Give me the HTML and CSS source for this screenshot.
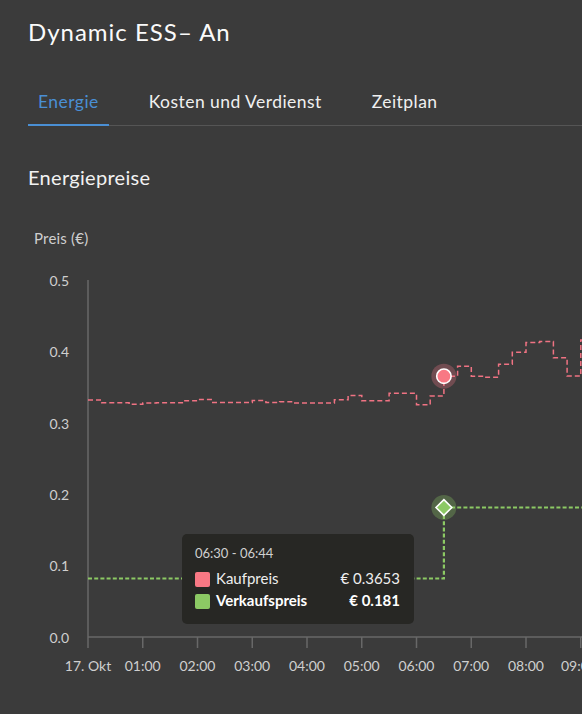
FILE: index.html
```html
<!DOCTYPE html>
<html lang="de">
<head>
<meta charset="utf-8">
<title>Dynamic ESS</title>
<link rel="stylesheet" href="styles.css">
</head>
<body>
<div class="screen">
  <header class="head">
    <h1 class="title">Dynamic ESS– An</h1>
    <nav class="tabs">
      <span class="tab active">Energie</span>
      <span class="tab">Kosten und Verdienst</span>
      <span class="tab">Zeitplan</span>
    </nav>
  </header>
  <section class="prices">
    <h2 class="section-title">Energiepreise</h2>
    <div class="chart">
      <svg class="chart-svg" width="582" height="525" viewBox="0 189 582 525" xmlns="http://www.w3.org/2000/svg">
        <text class="axis-title" x="34" y="244">Preis (€)</text>
        <g class="ylabels">
          <text x="69" y="285.5">0.5</text>
          <text x="69" y="357">0.4</text>
          <text x="69" y="428.5">0.3</text>
          <text x="69" y="499.5">0.2</text>
          <text x="69" y="571">0.1</text>
          <text x="69" y="642.5">0.0</text>
        </g>
        <g class="axes">
          <line x1="88" y1="280" x2="88" y2="637"/>
          <line x1="88" y1="637" x2="600" y2="637"/>
          <line x1="88" y1="637" x2="88" y2="648"/>
          <line x1="142.75" y1="637" x2="142.75" y2="648"/>
          <line x1="197.5" y1="637" x2="197.5" y2="648"/>
          <line x1="252.25" y1="637" x2="252.25" y2="648"/>
          <line x1="307" y1="637" x2="307" y2="648"/>
          <line x1="361.75" y1="637" x2="361.75" y2="648"/>
          <line x1="416.5" y1="637" x2="416.5" y2="648"/>
          <line x1="471.25" y1="637" x2="471.25" y2="648"/>
          <line x1="526" y1="637" x2="526" y2="648"/>
          <line x1="580.75" y1="637" x2="580.75" y2="648"/>
        </g>
        <g class="xlabels">
          <text x="88" y="670.5">17. Okt</text>
          <text x="142.75" y="670.5">01:00</text>
          <text x="197.5" y="670.5">02:00</text>
          <text x="252.25" y="670.5">03:00</text>
          <text x="307" y="670.5">04:00</text>
          <text x="361.75" y="670.5">05:00</text>
          <text x="416.5" y="670.5">06:00</text>
          <text x="471.25" y="670.5">07:00</text>
          <text x="526" y="670.5">08:00</text>
          <text x="579" y="670.5">09:00</text>
        </g>
        <path class="line-sell" d="M88 578.5 H443.9 V507.5 H600"/>
        <path class="line-buy" d="M88 400 H101.7 V402.7 H115.4 V402.7 H129.1 V404.3 H142.8 V402.9 H156.4 V402.7 H170.1 V402.7 H183.8 V400.7 H197.5 V399.5 H211.2 V402.4 H252.3 V400.6 H265.9 V402.6 H279.6 V401.7 H293.3 V403 H334.4 V399.8 H348.1 V395.5 H361.8 V400.7 H389.1 V393.3 H416.5 V404.7 H430.2 V396 H443.9 V376.2 H457.6 V366.3 H471.3 V376.2 H484.9 V377.3 H498.6 V364.3 H512.3 V352.3 H526 V342.5 H539.7 V341.5 H553.4 V357.7 H567.1 V376 H580.8 V340 H600"/>
        <circle class="halo-buy" cx="443.9" cy="376.2" r="12.5"/>
        <circle class="dot-buy" cx="443.9" cy="376.2" r="7.2"/>
        <circle class="halo-sell" cx="443.9" cy="507.5" r="12.5"/>
        <polygon class="dot-sell" points="443.9,499.6 451.8,507.5 443.9,515.4 436,507.5"/>
      </svg>
      <div class="tooltip">
        <div class="tt-time">06:30 - 06:44</div>
        <div class="tt-rows">
          <span class="swatch buy"></span><span class="tt-label">Kaufpreis</span><span class="tt-value">€ 0.3653</span>
          <span class="swatch sell"></span><span class="tt-label strong">Verkaufspreis</span><span class="tt-value strong">€ 0.181</span>
        </div>
      </div>
    </div>
  </section>
</div>
</body>
</html>
```

FILE: styles.css
```css
html, body {
  margin: 0;
  padding: 0;
  background: #3b3b3b;
}
body {
  width: 582px;
  height: 714px;
  overflow: hidden;
  font-family: Lato, "Noto Sans", "Liberation Sans", sans-serif;
  color: #f4f4f4;
}
.screen {
  width: 582px;
  overflow: hidden;
}
.head {
  padding-left: 28px;
}
.title {
  margin: 0;
  padding-top: 17px;
  font-size: 24px;
  line-height: 30px;
  font-weight: 400;
  letter-spacing: 1px;
  color: #fafafa;
}
.tabs {
  display: flex;
  gap: 30px;
  margin-top: 45px;
  border-bottom: 1px solid #555555;
}
.tab {
  padding: 0 10px 12px;
  font-size: 17.5px;
  line-height: 20px;
  letter-spacing: 0.45px;
  color: #f0f0f0;
  border-bottom: 2px solid transparent;
  margin-bottom: -1px;
  white-space: nowrap;
}
.tab.active {
  color: #4a8fd4;
  border-bottom-color: #4a8fd4;
}
.section-title {
  margin: 39px 0 0;
  padding-left: 28px;
  font-size: 20px;
  line-height: 24px;
  font-weight: 400;
  letter-spacing: 0.3px;
  color: #f2f2f2;
}
.chart {
  position: relative;
  height: 525px;
}
.chart-svg {
  display: block;
}
.axis-title {
  font-family: Lato, "Noto Sans", sans-serif;
  font-size: 15px;
  letter-spacing: 0.2px;
  fill: #cfcfcf;
}
.ylabels text {
  font-family: Lato, "Noto Sans", sans-serif;
  font-size: 14px;
  fill: #cfcfcf;
  text-anchor: end;
}
.xlabels text {
  font-family: Lato, "Noto Sans", sans-serif;
  font-size: 14px;
  fill: #cfcfcf;
  text-anchor: middle;
}
.axes line {
  stroke: #686868;
  stroke-width: 1.5;
}
.line-sell {
  fill: none;
  stroke: #8cc964;
  stroke-width: 2.2;
  stroke-dasharray: 4 2.2;
}
.line-buy {
  fill: none;
  stroke: #f07383;
  stroke-width: 1.5;
  stroke-dasharray: 5 3;
}
.halo-buy {
  fill: rgba(240, 115, 131, 0.3);
}
.dot-buy {
  fill: #f87884;
  stroke: #ffffff;
  stroke-width: 1.6;
}
.halo-sell {
  fill: rgba(140, 201, 100, 0.3);
}
.dot-sell {
  fill: #8cc964;
  stroke: #ffffff;
  stroke-width: 1.6;
}
.tooltip {
  position: absolute;
  left: 182px;
  top: 345px;
  width: 232px;
  box-sizing: border-box;
  padding: 11px 14px 13px 13px;
  background: #272724;
  border-radius: 5px;
}
.tt-time {
  font-size: 13px;
  line-height: 16px;
  color: #d0d0d0;
}
.tt-rows {
  margin-top: 6px;
  display: grid;
  grid-template-columns: 15px auto 1fr;
  column-gap: 6px;
  align-items: center;
  font-size: 15px;
  line-height: 22px;
  color: #eeeeee;
}
.swatch {
  width: 15px;
  height: 15px;
  border-radius: 2px;
  margin-top: 2px;
}
.swatch.buy {
  background: #f87884;
}
.swatch.sell {
  background: #8cc964;
}
.tt-value {
  text-align: right;
}
.strong {
  font-weight: 700;
  color: #ffffff;
}
```
